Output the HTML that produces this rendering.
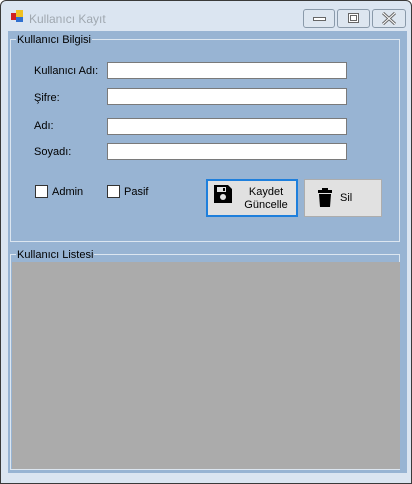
<!DOCTYPE html>
<html><head><style>
*{margin:0;padding:0;box-sizing:border-box}
body{width:412px;height:484px;overflow:hidden;background:#fff;font-family:"Liberation Sans",sans-serif;font-size:11px;position:relative}
.a{position:absolute}
.tb{position:absolute;left:107px;width:240px;height:17px;background:#fff;border:1px solid #7a7a7a}
.lb{position:absolute;left:34px;color:#000}
.cb{position:absolute;width:13px;height:13px;background:#fff;border:1px solid #333}
.gb{position:absolute;border:1px solid #dce6f0}
</style></head><body>
<div class="a" style="left:0;top:0;width:412px;height:484px;background:#dbe5f1;border:1px solid #3a3a3a;border-radius:6px 6px 0 0"></div>
<div class="a" style="left:11px;top:13px;width:6px;height:7px;background:#d02020"></div>
<div class="a" style="left:16px;top:10px;width:7px;height:7px;background:#f0c020"></div>
<div class="a" style="left:16px;top:17px;width:7px;height:5px;background:#3070d0"></div>
<div class="a" style="left:29px;top:12px;font-size:12px;color:#a0a8b0">Kullanıcı Kayıt</div>
<div class="a" style="left:303px;top:9px;width:32px;height:19px;border:1px solid #8a9aaa;border-radius:3px;background:#dde6f0"></div>
<div class="a" style="left:313px;top:17px;width:13px;height:4px;border:1px solid #666;background:#fff"></div>
<div class="a" style="left:337px;top:9px;width:33px;height:19px;border:1px solid #8a9aaa;border-radius:3px;background:#dde6f0"></div>
<div class="a" style="left:348px;top:13px;width:11px;height:10px;border:1px solid #666;background:#fff"></div>
<div class="a" style="left:350px;top:15px;width:7px;height:6px;border:1px solid #666"></div>
<div class="a" style="left:372px;top:9px;width:34px;height:19px;border:1px solid #8a9aaa;border-radius:3px;background:#dde6f0"></div>
<svg class="a" style="left:381px;top:12px" width="16" height="13" viewBox="0 0 16 13"><path d="M2 1L14 12M14 1L2 12" stroke="#666" stroke-width="3"/><path d="M2 1L14 12M14 1L2 12" stroke="#fff" stroke-width="1"/></svg>
<div class="a" style="left:8px;top:31px;width:399px;height:442px;background:#98b4d3"></div>
<div class="gb" style="left:10px;top:39px;width:390px;height:203px"></div>
<div class="a" style="left:16px;top:34px;background:#98b4d3;padding:0 1px">Kullanıcı Bilgisi</div>
<div class="lb" style="top:65px">Kullanıcı Adı:</div>
<div class="lb" style="top:92px">Şifre:</div>
<div class="lb" style="top:120px">Adı:</div>
<div class="lb" style="top:146px">Soyadı:</div>
<div class="tb" style="top:62px"></div>
<div class="tb" style="top:88px"></div>
<div class="tb" style="top:118px"></div>
<div class="tb" style="top:143px"></div>
<div class="cb" style="left:35px;top:185px"></div>
<div class="a" style="left:52px;top:186px">Admin</div>
<div class="cb" style="left:107px;top:185px"></div>
<div class="a" style="left:124px;top:186px">Pasif</div>
<div class="a" style="left:206px;top:179px;width:92px;height:38px;background:#e1e1e1;border:2px solid #1e7fdc"></div>
<svg class="a" style="left:213px;top:184px" width="20" height="20" viewBox="0 0 20 20"><path d="M1 1h14l4 4v14H1z" fill="#000"/><rect x="4" y="3" width="9" height="5" fill="#e1e1e1"/><rect x="10" y="4" width="2" height="3" fill="#000"/><circle cx="10" cy="13" r="3" fill="#e1e1e1"/></svg>
<div class="a" style="left:238px;top:186px;width:56px;text-align:center;line-height:13px">Kaydet<br>Güncelle</div>
<div class="a" style="left:304px;top:179px;width:78px;height:38px;background:#e1e1e1;border:1px solid #adadad"></div>
<svg class="a" style="left:317px;top:188px" width="16" height="20" viewBox="0 0 16 20"><rect x="1" y="2" width="14" height="3" fill="#000"/><rect x="5" y="0" width="6" height="3" fill="#000"/><path d="M2 6h12l-1 13H3z" fill="#000"/></svg>
<div class="a" style="left:340px;top:192px">Sil</div>
<div class="gb" style="left:10px;top:254px;width:390px;height:216px"></div>
<div class="a" style="left:12px;top:262px;width:388px;height:207px;background:#ababab"></div>
<div class="a" style="left:16px;top:249px;background:#98b4d3;padding:0 1px">Kullanıcı Listesi</div>
</body></html>
